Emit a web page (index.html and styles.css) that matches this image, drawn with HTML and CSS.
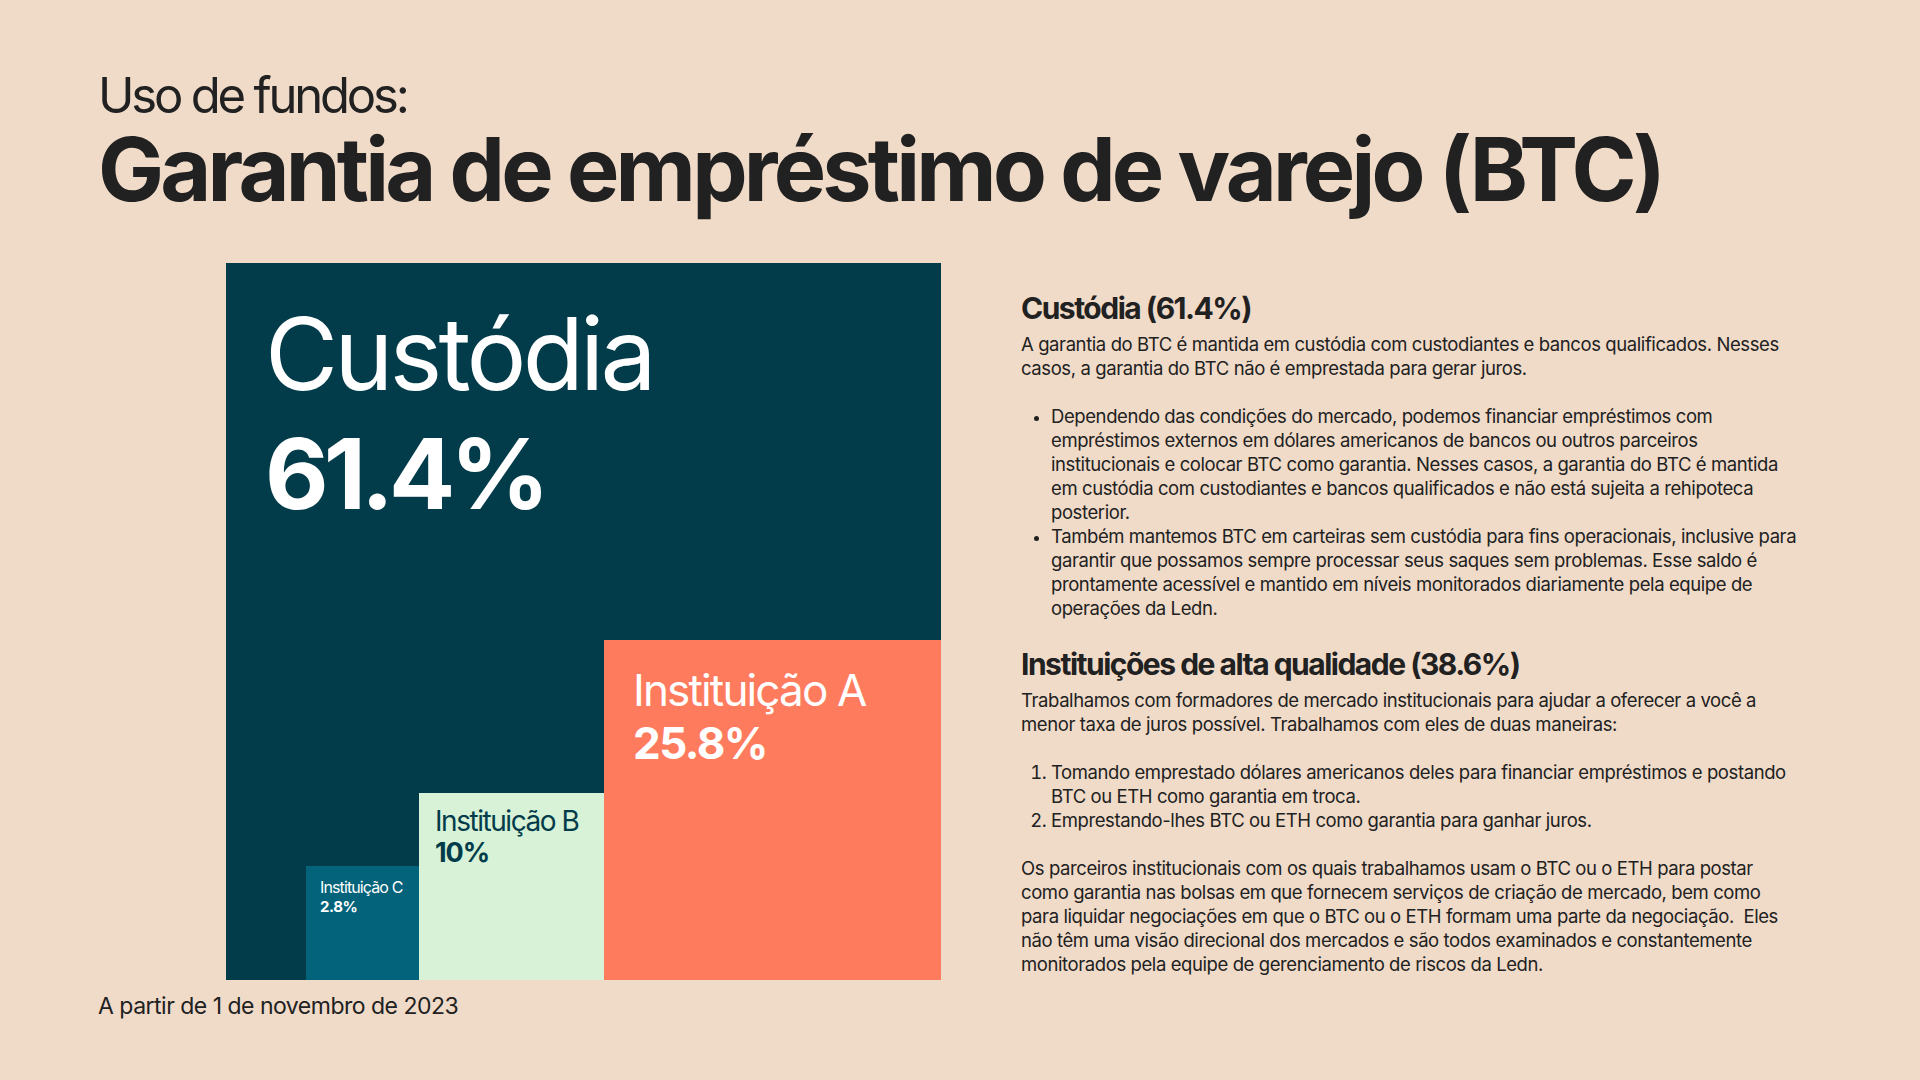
FILE: index.html
```html
<!DOCTYPE html>
<html lang="pt-BR">
<head>
<meta charset="utf-8">
<title>Uso de fundos: Garantia de empréstimo de varejo (BTC)</title>
<link rel="stylesheet" href="styles.css">
</head>
<body>
<main class="slide">
  <header class="titles">
    <p class="kicker">Uso de fundos:</p>
    <h1 class="title">Garantia de empréstimo de varejo (BTC)</h1>
  </header>
  <div class="content">
    <section class="chart-col">
      <div class="treemap">
        <div class="tile-label tile-main">
          <span class="name">Custódia</span>
          <span class="pct">61.4%</span>
        </div>
        <div class="tile-row">
          <div class="tile tile-c">
            <span class="name">Instituição C</span>
            <span class="pct">2.8%</span>
          </div>
          <div class="tile tile-b">
            <span class="name">Instituição B</span>
            <span class="pct">10%</span>
          </div>
          <div class="tile tile-a">
            <span class="name">Instituição A</span>
            <span class="pct">25.8%</span>
          </div>
        </div>
      </div>
      <p class="asof">A partir de 1 de novembro de 2023</p>
    </section>
    <section class="text-col">
      <h2 class="sec-title">Custódia (61.4%)</h2>
      <p class="body">A garantia do BTC é mantida em custódia com custodiantes e bancos qualificados. Nesses<br>casos, a garantia do BTC não é emprestada para gerar juros.</p>
      <ul class="list">
        <li>Dependendo das condições do mercado, podemos financiar empréstimos com<br>empréstimos externos em dólares americanos de bancos ou outros parceiros<br>institucionais e colocar BTC como garantia. Nesses casos, a garantia do BTC é mantida<br>em custódia com custodiantes e bancos qualificados e não está sujeita a rehipoteca<br>posterior.</li>
        <li>Também mantemos BTC em carteiras sem custódia para fins operacionais, inclusive para<br>garantir que possamos sempre processar seus saques sem problemas. Esse saldo é<br>prontamente acessível e mantido em níveis monitorados diariamente pela equipe de<br>operações da Ledn.</li>
      </ul>
      <h2 class="sec-title sec-second">Instituições de alta qualidade (38.6%)</h2>
      <p class="body">Trabalhamos com formadores de mercado institucionais para ajudar a oferecer a você a<br>menor taxa de juros possível. Trabalhamos com eles de duas maneiras:</p>
      <ol class="list list-num">
        <li>Tomando emprestado dólares americanos deles para financiar empréstimos e postando<br>BTC ou ETH como garantia em troca.</li>
        <li>Emprestando-lhes BTC ou ETH como garantia para ganhar juros.</li>
      </ol>
      <p class="body">Os parceiros institucionais com os quais trabalhamos usam o BTC ou o ETH para postar<br>como garantia nas bolsas em que fornecem serviços de criação de mercado, bem como<br>para liquidar negociações em que o BTC ou o ETH formam uma parte da negociação.&nbsp; Eles<br>não têm uma visão direcional dos mercados e são todos examinados e constantemente<br>monitorados pela equipe de gerenciamento de riscos da Ledn.</p>
    </section>
  </div>
</main>
</body>
</html>
```

FILE: styles.css
```css
* {
  box-sizing: border-box;
}

html,
body {
  margin: 0;
  padding: 0;
}

body {
  width: 1920px;
  height: 1080px;
  overflow: hidden;
  background: #f0dbc9;
  color: #212121;
  font-family: Inter, "Noto Sans", "Liberation Sans", sans-serif;
}

.slide {
  padding: 68px 0 0 98px;
}

.titles {
  display: flex;
  flex-direction: column;
}

.kicker {
  margin: 0;
  font-size: 49px;
  line-height: 56px;
  font-weight: 400;
  letter-spacing: -0.065em;
}

.title {
  margin: 1px 0 0;
  font-size: 88px;
  line-height: 88px;
  font-weight: 700;
  letter-spacing: -0.043em;
}

.content {
  display: flex;
  margin-top: 50px;
}

.chart-col {
  display: flex;
  flex-direction: column;
  width: 923px;
}

.treemap {
  margin-left: 128px;
  width: 715px;
  height: 717px;
  background: #023c4a;
  display: flex;
  flex-direction: column;
  justify-content: space-between;
}

.tile-label,
.tile {
  display: flex;
  flex-direction: column;
  color: #ffffff;
}

.tile-main {
  padding: 31px 0 0 39px;
}

.tile-main .name {
  font-size: 100px;
  line-height: 120px;
  font-weight: 400;
  letter-spacing: -0.038em;
}

.tile-main .pct {
  font-size: 98px;
  line-height: 120px;
  font-weight: 700;
  letter-spacing: -0.05em;
}

.tile-row {
  display: flex;
  justify-content: flex-end;
  align-items: flex-end;
}

.tile-c {
  width: 113px;
  height: 114px;
  background: #03637a;
  padding: 12px 0 0 14px;
}

.tile-c .name {
  font-size: 16px;
  line-height: 19px;
  letter-spacing: -0.055em;
}

.tile-c .pct {
  font-size: 15px;
  line-height: 19px;
  font-weight: 700;
  letter-spacing: -0.03em;
}

.tile-b {
  width: 185px;
  height: 187px;
  background: #d7f2d6;
  color: #023c4a;
  padding: 12px 0 0 16px;
}

.tile-b .name {
  font-size: 28px;
  line-height: 32px;
  letter-spacing: -0.052em;
}

.tile-b .pct {
  font-size: 27px;
  line-height: 32px;
  font-weight: 700;
  letter-spacing: -0.04em;
}

.tile-a {
  width: 337px;
  height: 340px;
  background: #ff7b5e;
  padding: 24px 0 0 29px;
}

.tile-a .name {
  font-size: 44px;
  line-height: 53px;
  letter-spacing: -0.042em;
}

.tile-a .pct {
  font-size: 44px;
  line-height: 53px;
  font-weight: 700;
  letter-spacing: -0.035em;
}

.asof {
  margin: 12px 0 0;
  font-size: 23px;
  line-height: 28px;
  letter-spacing: -0.022em;
}

.text-col {
  width: 820px;
  padding-top: 25px;
}

.sec-title {
  margin: 0;
  font-size: 30px;
  line-height: 40px;
  font-weight: 700;
  letter-spacing: -0.05em;
}

.body {
  margin: 4px 0 0;
  font-size: 18.5px;
  line-height: 24px;
  letter-spacing: -0.022em;
}

.list {
  margin: 24px 0 24px;
  padding-left: 30px;
  font-size: 18.5px;
  line-height: 24px;
  letter-spacing: -0.022em;
}

.list li::marker {
  font-size: 16px;
}

.list-num li::marker {
  font-size: 18.5px;
}

.list + .sec-title {
  margin-top: 24px;
}

.list + .body {
  margin-top: 0;
}
```
